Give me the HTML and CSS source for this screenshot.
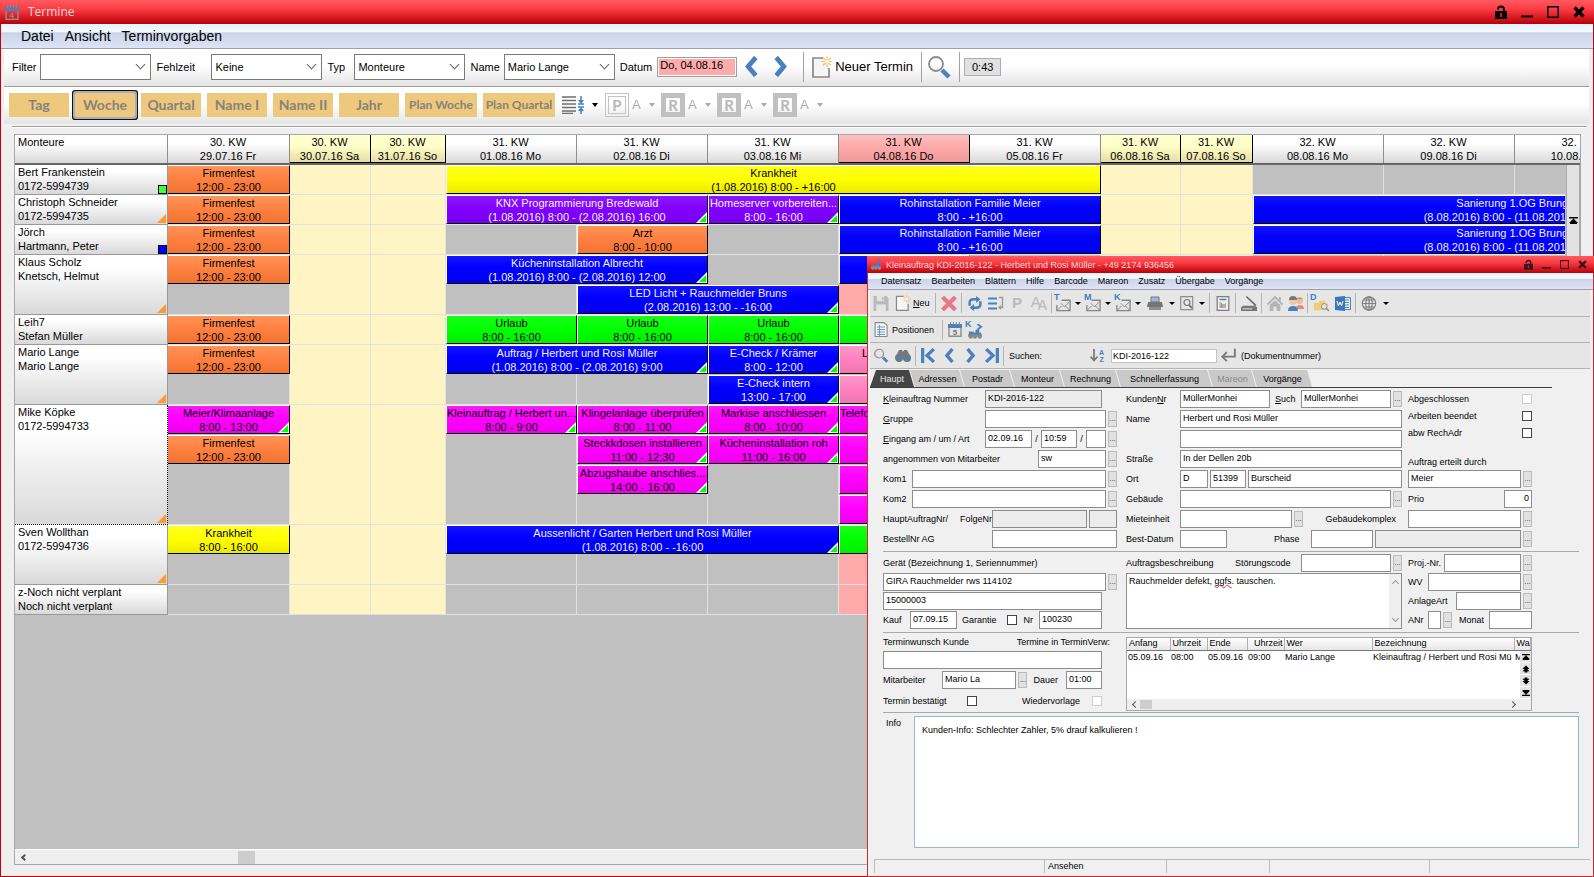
FILE: index.html
```html
<!DOCTYPE html>
<html lang="de">
<head>
<meta charset="utf-8">
<title>Termine</title>
<link rel="stylesheet" href="styles.css">
</head>
<body>
<svg class="defs" aria-hidden="true">
  <symbol id="lock" viewBox="0 0 12 14"><path d="M2 4.500a4 4 0 0 1 8 0V7H8V4.500a2 2 0 0 0-4 0H2z"/><path d="M0 6h12v8H0z"/><path d="M5 8h2v4H5z" fill="#b02028"/></symbol>
  <symbol id="min" viewBox="0 0 12 14"><path d="M0 10.500h12v2H0z"/></symbol>
  <symbol id="max" viewBox="0 0 12 14"><path d="M.75 1.750h10.500v10.500H.75z" fill="none" stroke="currentColor" stroke-width="1.500"/></symbol>
  <symbol id="close" viewBox="0 0 12 14"><path d="M1.500 2.500l9 9M10.500 2.500l-9 9" stroke="currentColor" stroke-width="3.200"/></symbol>
  <symbol id="left" viewBox="0 0 14 22"><path d="M12 1.500L4 11l8 9.500" fill="none" stroke="#4a80bd" stroke-width="5"/></symbol>
  <symbol id="right" viewBox="0 0 14 22"><path d="M2 1.500L10 11l-8 9.500" fill="none" stroke="#4a80bd" stroke-width="5"/></symbol>
  <symbol id="new" viewBox="0 0 20 22"><path d="M11 2H1v19h16v-9" fill="#f6f6f6" stroke="#888" stroke-width="1.700"/><path d="M15 0v11M9.500 5.500h11M11 1.500l8 8M19 1.500l-8 8" stroke="#f0c67c" stroke-width="1.200"/><circle cx="15" cy="5.500" r="2" fill="#fff3d6"/></symbol>
  <symbol id="glass" viewBox="0 0 24 24"><circle cx="9" cy="9" r="7" fill="none" stroke="#8a8a8a" stroke-width="1.800"/><path d="M15 15l7 7" stroke="#4a80bd" stroke-width="4.500"/></symbol>
  <symbol id="lines" viewBox="0 0 22 18"><path d="M0 1h14M0 4.500h14M0 8h14M0 11.500h14M0 15h14M0 17.500h11" stroke="#6e6e6e" stroke-width="1.500"/><path d="M16 8h6M16 11h6M19 0v5M19 18v-4" stroke="#4a80bd" stroke-width="1.500"/><path d="M16 4h6l-3 4zM16 15h6l-3-4z" fill="#4a80bd"/></symbol>
  <symbol id="cal" viewBox="0 0 14 15"><path d="M1 4v10.300h12V4" fill="none" stroke="#8d8d8d" stroke-width="1.400"/><path d="M0 2h14v4H0z" fill="#4a80bd"/><path d="M2.500 0v3M5.500 0v3M8.500 0v3M11.500 0v3" stroke="#8a8a8a"/></symbol>
  <symbol id="save" viewBox="0 0 14 14"><path d="M0 0h12l2 2v12H0z" fill="#b9b9b9"/><path d="M3 0h7v5H3zM2.500 8h9v6h-9z" fill="#e4e4e4"/><path d="M8 1h1.500v3H8z" fill="#b9b9b9"/></symbol>
  <symbol id="del" viewBox="0 0 14 14"><path d="M1 1l12 12M13 1L1 13" stroke="#e9788a" stroke-width="4"/></symbol>
  <symbol id="refresh" viewBox="0 0 14 14"><path d="M2 9V6q0-3 4-3h3M12 5v3q0 3-4 3H5" fill="none" stroke="#4a80bd" stroke-width="2.300"/><path d="M8 0l4 3-4 3.500zM6 14l-4-3 4-3.500z" fill="#4a80bd"/></symbol>
  <symbol id="listarr" viewBox="0 0 16 14"><path d="M0 2h9M0 7h9M0 12h9" stroke="#4a80bd" stroke-width="2"/><path d="M11 1h3.500v10H12" fill="none" stroke="#999" stroke-width="1.300"/><path d="M13 8.500v5L10 11z" fill="#999"/></symbol>
  <symbol id="mail" viewBox="0 0 17 15"><path d="M7 3h9v11H2V8" fill="none" stroke="#858585" stroke-width="1.400"/><path d="M6 6l4 4 6-6M2 14l5-5M16 14l-5-5" fill="none" stroke="#858585"/></symbol>
  <symbol id="printer" viewBox="0 0 16 15"><path d="M4 1h8v5H4z" fill="#9abadf" stroke="#777"/><path d="M1 6h14l1 5H0z" fill="#757575"/><path d="M2 11h12v3H2z" fill="#8d8d8d"/></symbol>
  <symbol id="preview" viewBox="0 0 14 15"><path d="M.700.700h12v13h-12z" fill="none" stroke="#8d8d8d" stroke-width="1.200"/><circle cx="7" cy="6.500" r="3" fill="none" stroke="#777" stroke-width="1.200"/><path d="M9 9l3 3" stroke="#777" stroke-width="1.800"/></symbol>
  <symbol id="chart" viewBox="0 0 13 15"><path d="M.700.700h11.600v13.600H.700z" fill="#f0f0f0" stroke="#808080" stroke-width="1.300"/><path d="M3 3.500h7" stroke="#4a80bd" stroke-width="1.500"/><path d="M3.500 12V6M6 12V8M9 12V7" stroke="#d9a860" stroke-width="1.200"/><path d="M4.800 12V7M7.500 12V8" stroke="#4a80bd"/></symbol>
  <symbol id="scanner" viewBox="0 0 15 14"><path d="M5 .500l9 8.500" stroke="#666" stroke-width="1.400"/><path d="M2 9h11l2 1.500V14H0v-3.500z" fill="#777"/><path d="M1.500 12h9" stroke="#ddd"/></symbol>
  <symbol id="house" viewBox="0 0 14 14"><path d="M0 8l7-7 7 7" fill="none" stroke="#b4b4b4" stroke-width="1.800"/><path d="M10.500 1h2v4h-2zM2 8.500L7 4l5 4.500V14H8.500v-4h-3v4H2z" fill="#b4b4b4"/></symbol>
  <symbol id="people" viewBox="0 0 16 15"><circle cx="11.500" cy="4.500" r="3.500" fill="#e8bd9b"/><path d="M8 3a4 3 0 0 1 7 0z" fill="#d98c58"/><path d="M8 13q0-4 4-4t4 4z" fill="#e88876"/><circle cx="5" cy="5" r="4" fill="#ecc7a8"/><path d="M1 4a4 4 0 0 1 8 0z" fill="#777"/><path d="M0 15q0-5 5-5t5 5z" fill="#4a80bd"/></symbol>
  <symbol id="folder" viewBox="0 0 17 16"><path d="M1 6h5l1-2h6v3h3l-2 7H1z" fill="#f2ca7e"/><circle cx="12" cy="10" r="3" fill="#e6e6e6" stroke="#888"/><path d="M14 12l3 3" stroke="#888" stroke-width="1.600"/></symbol>
  <symbol id="word" viewBox="0 0 16 15"><path d="M8 1.500h7.500v12H8z" fill="#e9f0f8" stroke="#4a80bd"/><path d="M9 4h5M9 6.500h5M9 9h5M9 11.500h5" stroke="#4a80bd"/><path d="M0 1l10-1v15L0 14z" fill="#3c76b8"/><path d="M2 5l1.400 5L5 6l1.500 4L8 5" fill="none" stroke="#fff"/></symbol>
  <symbol id="globe" viewBox="0 0 15 15"><g fill="none" stroke="#808080" stroke-width="1.200"><circle cx="7.500" cy="7.500" r="6.700"/><ellipse cx="7.500" cy="7.500" rx="3.200" ry="6.700"/><path d="M7.500 1v13M1 7.500h13M2 4h11M2 11h11"/></g></symbol>
  <symbol id="doc" viewBox="0 0 13 15"><path d="M.600.600h9l3 3v11H.600z" fill="#f4f4f4" stroke="#888" stroke-width="1.100"/><path d="M2.500 5h8M2.500 7.500h8M2.500 10h8M2.500 12.500h8M5 3v11" stroke="#6d9bd0"/></symbol>
  <symbol id="truck" viewBox="0 0 17 16"><path d="M11 0l4 3-4 3" fill="none" stroke="#4a80bd" stroke-width="2"/><path d="M2 8h5v1h2V6h4v3h2v4H2z" fill="#4a80bd"/><path d="M1 11h15v2.500H1z" fill="#8a8a8a"/><circle cx="4" cy="13.500" r="2.200" fill="#8a8a8a"/><circle cx="8.500" cy="13.500" r="2.200" fill="#8a8a8a"/><circle cx="13.500" cy="13.500" r="2.200" fill="#8a8a8a"/></symbol>
  <symbol id="binoc" viewBox="0 0 16 13"><path d="M4 1h3l1 2 1-2h3l4 8H0z" fill="#777"/><circle cx="4" cy="9" r="3.200" fill="#4a80bd" stroke="#777" stroke-width="1.600"/><circle cx="12" cy="9" r="3.200" fill="#4a80bd" stroke="#777" stroke-width="1.600"/></symbol>
  <symbol id="first" viewBox="0 0 14 14"><path d="M2 0v14M12.500 1L6 7l6.500 6" fill="none" stroke="#4a80bd" stroke-width="3"/></symbol>
  <symbol id="last" viewBox="0 0 14 14"><path d="M12 0v14M1.500 1L8 7l-6.500 6" fill="none" stroke="#4a80bd" stroke-width="3"/></symbol>
  <symbol id="down" viewBox="0 0 8 13"><path d="M4 0v11M.500 7.500L4 11.500l3.500-4" fill="none" stroke="#777" stroke-width="1.700"/></symbol>
  <symbol id="enter" viewBox="0 0 14 12"><path d="M13 0v7H2M6 3L2 7l4 4" fill="none" stroke="#777" stroke-width="1.600"/></symbol>
  <symbol id="totop" viewBox="0 0 9 7"><path d="M0 0h9v1.500H0zM4.500 1.500L9 6H0zM1 6h7v1H1z"/></symbol>
  <symbol id="up2" viewBox="0 0 9 8"><path d="M4.500 0L8.500 4h-8zM4.500 2.500L8.500 6.500h-8zM3 6h3v2H3z"/></symbol>
  <symbol id="tick" viewBox="0 0 11 11"><path d="M11 0v11H0z" fill="#fff"/><path d="M10 3v7H3z" fill="#0f0"/></symbol>
</svg>

<main class="window">
  <header class="titlebar">
    <svg class="app-icon"><use href="#cal"/><text x="7" y="13" text-anchor="middle">4</text></svg>
    <h1>Termine</h1>
    <div class="win-buttons">
      <button aria-label="Sperren"><svg><use href="#lock"/></svg></button>
      <button aria-label="Minimieren"><svg><use href="#min"/></svg></button>
      <button aria-label="Maximieren"><svg><use href="#max"/></svg></button>
      <button aria-label="Schließen"><svg><use href="#close"/></svg></button>
    </div>
  </header>
  <nav class="menubar"><button>Datei</button><button>Ansicht</button><button>Terminvorgaben</button></nav>

  <div class="bar filterbar">
    <label for="f1">Filter</label>
    <span class="combo"><select id="f1"><option></option></select></span>
    <label for="f2" class="wide-label">Fehlzeit</label>
    <span class="combo"><select id="f2"><option>Keine</option></select></span>
    <label for="f3" class="typ">Typ</label>
    <span class="combo"><select id="f3"><option>Monteure</option></select></span>
    <label for="f4" class="name">Name</label>
    <span class="combo"><select id="f4"><option>Mario Lange</option></select></span>
    <label for="f5">Datum</label>
    <input id="f5" class="date" value="Do, 04.08.16">
    <button class="arrow" aria-label="Zurück"><svg><use href="#left"/></svg></button>
    <button class="arrow" aria-label="Vor"><svg><use href="#right"/></svg></button>
    <i class="rule"></i>
    <button class="new"><svg><use href="#new"/></svg>Neuer Termin</button>
    <i class="rule"></i>
    <button class="find" aria-label="Suchen"><svg><use href="#glass"/></svg></button>
    <i class="rule"></i>
    <output class="clock">0:43</output>
  </div>

  <div class="bar viewbar">
    <button class="view">Tag</button>
    <button class="view active">Woche</button>
    <button class="view">Quartal</button>
    <button class="view">Name I</button>
    <button class="view">Name II</button>
    <button class="view">Jahr</button>
    <button class="view plan">Plan Woche</button>
    <button class="view plan">Plan Quartal</button>
    <button class="split height" aria-label="Zeilenhöhe"><svg class="lines"><use href="#lines"/></svg><i class="caret"></i></button>
    <button class="split off"><b class="tile outline">P</b>A<i class="caret"></i></button>
    <button class="split off"><b class="tile">R</b>A<i class="caret"></i></button>
    <button class="split off"><b class="tile">R</b>A<i class="caret"></i></button>
    <button class="split off"><b class="tile">R</b>A<i class="caret"></i></button>
  </div>
  <hr class="groove">

  <section class="planner">
    <div class="days head">
      <div class="corner">Monteure</div>
      <div>30. KW<br>29.07.16 Fr</div>
      <div class="we">30. KW<br>30.07.16 Sa</div>
      <div class="we">30. KW<br>31.07.16 So</div>
      <div>31. KW<br>01.08.16 Mo</div>
      <div>31. KW<br>02.08.16 Di</div>
      <div>31. KW<br>03.08.16 Mi</div>
      <div class="today">31. KW<br>04.08.16 Do</div>
      <div>31. KW<br>05.08.16 Fr</div>
      <div class="we">31. KW<br>06.08.16 Sa</div>
      <div class="we">31. KW<br>07.08.16 So</div>
      <div>32. KW<br>08.08.16 Mo</div>
      <div>32. KW<br>09.08.16 Di</div>
      <div>32. KW<br>10.08.16 Mi</div>
    </div>
    <div class="plan-body">
      <div class="days rows">
        <i class="col c2"></i><i class="col c3 we"></i><i class="col c4 we"></i><i class="col c5"></i><i class="col c6"></i><i class="col c7"></i><i class="col c8 today"></i><i class="col c9"></i><i class="col c10 we"></i><i class="col c11 we"></i><i class="col c12"></i><i class="col c13"></i><i class="col c14"></i>
        <i class="line r1"></i><i class="line r2"></i><i class="line r3"></i><i class="line r4 h2"></i><i class="line r6"></i><i class="line r7 h2"></i><i class="line r9 h4"></i><i class="line r13 h2"></i><i class="line r15"></i>

        <div class="who r1">Bert Frankenstein<br>0172-5994739<i class="mark green"></i></div>
        <div class="who r2">Christoph Schneider<br>0172-5994735<i class="flag"></i></div>
        <div class="who r3">Jörch<br>Hartmann, Peter<i class="mark blue"></i></div>
        <div class="who r4 h2">Klaus Scholz<br>Knetsch, Helmut<i class="flag"></i></div>
        <div class="who r6">Leih7<br>Stefan Müller</div>
        <div class="who r7 h2">Mario Lange<br>Mario Lange<i class="flag"></i></div>
        <div class="who r9 h4 focus">Mike Köpke<br>0172-5994733<i class="flag"></i></div>
        <div class="who r13 h2">Sven Wollthan<br>0172-5994736<i class="flag"></i></div>
        <div class="who r15">z-Noch nicht verplant<br>Noch nicht verplant</div>

        <div class="ev orange r1 c2">Firmenfest<br>12:00 - 23:00</div>
        <div class="ev yellow r1 c5 w5">Krankheit<br>(1.08.2016) 8:00 - +16:00</div>
        <div class="ev orange r2 c2">Firmenfest<br>12:00 - 23:00</div>
        <div class="ev violet r2 c5 w2">KNX Programmierung Bredewald<br>(1.08.2016) 8:00 - (2.08.2016) 16:00<svg><use href="#tick"/></svg></div>
        <div class="ev violet r2 c7">Homeserver vorbereiten...<br>8:00 - 16:00<svg><use href="#tick"/></svg></div>
        <div class="ev blue r2 c8 w2">Rohinstallation Familie Meier<br>8:00 - +16:00</div>
        <div class="ev blue r2 c12 w4">Sanierung 1.OG Brungs<br>(8.08.2016) 8:00 - (11.08.2016) 16:00</div>
        <div class="ev orange r3 c2">Firmenfest<br>12:00 - 23:00</div>
        <div class="ev orange r3 c6">Arzt<br>8:00 - 10:00</div>
        <div class="ev blue r3 c8 w2">Rohinstallation Familie Meier<br>8:00 - +16:00</div>
        <div class="ev blue r3 c12 w4">Sanierung 1.OG Brungs<br>(8.08.2016) 8:00 - (11.08.2016) 16:00</div>
        <div class="ev orange r4 c2">Firmenfest<br>12:00 - 23:00</div>
        <div class="ev blue r4 c5 w2">Kücheninstallation Albrecht<br>(1.08.2016) 8:00 - (2.08.2016) 12:00<svg><use href="#tick"/></svg></div>
        <div class="ev blue r4 c8"></div>
        <div class="ev blue r5 c6 w2">LED Licht + Rauchmelder Bruns<br>(2.08.2016) 13:00 - -16:00<svg><use href="#tick"/></svg></div>
        <div class="ev orange r6 c2">Firmenfest<br>12:00 - 23:00</div>
        <div class="ev lime r6 c5">Urlaub<br>8:00 - 16:00</div>
        <div class="ev lime r6 c6">Urlaub<br>8:00 - 16:00</div>
        <div class="ev lime r6 c7">Urlaub<br>8:00 - 16:00</div>
        <div class="ev lime r6 c8"></div>
        <div class="ev orange r7 c2">Firmenfest<br>12:00 - 23:00</div>
        <div class="ev blue r7 c5 w2">Auftrag / Herbert und Rosi Müller<br>(1.08.2016) 8:00 - (2.08.2016) 9:00<svg><use href="#tick"/></svg></div>
        <div class="ev blue r7 c7">E-Check / Krämer<br>8:00 - 12:00<svg><use href="#tick"/></svg></div>
        <div class="ev rose r7 c8">L</div>
        <div class="ev blue r8 c7">E-Check intern<br>13:00 - 17:00<svg><use href="#tick"/></svg></div>
        <div class="ev rose r8 c8"></div>
        <div class="ev pink r9 c2">Meier/Klimaanlage<br>8:00 - 13:00<svg><use href="#tick"/></svg></div>
        <div class="ev pink r9 c5">Kleinauftrag / Herbert un...<br>8:00 - 9:00<svg><use href="#tick"/></svg></div>
        <div class="ev pink r9 c6">Klingelanlage überprüfen<br>8:00 - 11:00<svg><use href="#tick"/></svg></div>
        <div class="ev pink r9 c7">Markise anschliessen<br>8:00 - 10:00<svg><use href="#tick"/></svg></div>
        <div class="ev pink start r9 c8">Telefo</div>
        <div class="ev orange r10 c2">Firmenfest<br>12:00 - 23:00</div>
        <div class="ev pink r10 c6">Steckkdosen installieren<br>11:00 - 12:30<svg><use href="#tick"/></svg></div>
        <div class="ev pink r10 c7">Kücheninstallation roh<br>11:00 - 16:00<svg><use href="#tick"/></svg></div>
        <div class="ev pink r10 c8"></div>
        <div class="ev pink r11 c6">Abzugshaube anschlies...<br>14:00 - 16:00<svg><use href="#tick"/></svg></div>
        <div class="ev pink r11 c8"></div>
        <div class="ev pink r12 c8"></div>
        <div class="ev yellow r13 c2">Krankheit<br>8:00 - 16:00</div>
        <div class="ev blue r13 c5 w3">Aussenlicht / Garten Herbert und Rosi Müller<br>(1.08.2016) 8:00 - -16:00<svg><use href="#tick"/></svg></div>
        <div class="ev lime r13 c8"></div>
      </div>
      <div class="vscroll"><button aria-label="Zum Anfang"><svg><use href="#totop"/></svg></button></div>
    </div>
    <div class="hscroll"><button aria-label="Nach links"><i class="chev west"></i></button><i class="thumb"></i></div>
  </section>
</main>

<section class="dialog" role="dialog" aria-labelledby="dt">
  <header class="titlebar small">
    <svg class="app-icon"><use href="#truck"/></svg>
    <h2 id="dt">Kleinauftrag KDI-2016-122 - Herbert und Rosi Müller - +49 2174 936456</h2>
    <div class="win-buttons">
      <button aria-label="Sperren"><svg><use href="#lock"/></svg></button>
      <button aria-label="Minimieren"><svg><use href="#min"/></svg></button>
      <button aria-label="Maximieren"><svg><use href="#max"/></svg></button>
      <button aria-label="Schließen"><svg><use href="#close"/></svg></button>
    </div>
  </header>
  <nav class="menubar small"><button>Datensatz</button><button>Bearbeiten</button><button>Blättern</button><button>Hilfe</button><button>Barcode</button><button>Mareon</button><button>Zusatz</button><button>Übergabe</button><button>Vorgänge</button></nav>

  <div class="tools">
    <button class="t22" aria-label="Speichern"><svg><use href="#save"/></svg></button>
    <button class="t-new"><svg><use href="#new"/></svg><span><u>N</u>eu</span></button>
    <i class="sep"></i>
    <button class="t22" aria-label="Löschen"><svg><use href="#del"/></svg></button>
    <i class="sep"></i>
    <button class="t22" aria-label="Aktualisieren"><svg><use href="#refresh"/></svg></button>
    <button class="t20" aria-label="Liste"><svg><use href="#listarr"/></svg></button>
    <button class="t22 letter">P</button>
    <button class="t22 letter aa">A<sub>A</sub></button>
    <i class="sep"></i>
    <button class="t18 mail"><b>T</b><svg><use href="#mail"/></svg></button><i class="caret"></i>
    <button class="t18 mail"><b>M</b><svg><use href="#mail"/></svg></button><i class="caret"></i>
    <button class="t18 mail"><b>K</b><svg><use href="#mail"/></svg></button><i class="caret"></i>
    <button class="t22" aria-label="Drucken"><svg><use href="#printer"/></svg></button><i class="caret"></i>
    <button class="t18" aria-label="Vorschau"><svg><use href="#preview"/></svg></button><i class="caret"></i>
    <i class="sep"></i>
    <button class="t22" aria-label="Auswertung"><svg><use href="#chart"/></svg></button>
    <i class="sep"></i>
    <button class="t22" aria-label="Scannen"><svg><use href="#scanner"/></svg></button>
    <i class="sep"></i>
    <button class="t22" aria-label="Start"><svg><use href="#house"/></svg></button>
    <button class="t20" aria-label="Kunden"><svg><use href="#people"/></svg></button>
    <i class="sep"></i>
    <button class="t22 mail"><b>D</b><svg><use href="#folder"/></svg></button>
    <button class="t22" aria-label="Word"><svg><use href="#word"/></svg></button>
    <i class="sep"></i>
    <button class="t22" aria-label="Web"><svg><use href="#globe"/></svg></button><i class="caret"></i>
  </div>
  <div class="tools">
    <button class="t-pos"><svg><use href="#doc"/></svg>Positionen</button>
    <i class="sep"></i>
    <button class="t20 calbtn"><svg><use href="#cal"/></svg><b>5</b></button>
    <button class="t20 mail"><b>K</b><svg><use href="#truck"/></svg></button>
  </div>
  <div class="tools">
    <button class="t22" aria-label="Suchen"><svg><use href="#glass"/></svg></button>
    <button class="t22" aria-label="Fernglas"><svg><use href="#binoc"/></svg></button>
    <i class="sep"></i>
    <button class="t20" aria-label="Erster"><svg><use href="#first"/></svg></button>
    <button class="t22" aria-label="Vorheriger"><svg><use href="#left"/></svg></button>
    <button class="t22" aria-label="Nächster"><svg><use href="#right"/></svg></button>
    <button class="t20" aria-label="Letzter"><svg><use href="#last"/></svg></button>
    <i class="sep"></i>
    <label for="search" class="search-label">Suchen:</label>
    <button class="sort" aria-label="Sortieren"><svg><use href="#down"/></svg><b>A<br>Z</b></button>
    <input id="search" value="KDI-2016-122">
    <button class="t22" aria-label="Los"><svg><use href="#enter"/></svg></button>
    <span>(Dokumentnummer)</span>
  </div>

  <div class="tabs" role="tablist">
    <button role="tab" aria-selected="true" class="k1">Haupt</button><button role="tab" class="k2">Adressen</button><button role="tab" class="k2">Postadr</button><button role="tab" class="k2">Monteur</button><button role="tab" class="k3">Rechnung</button><button role="tab" class="k4">Schnellerfassung</button><button role="tab" class="k5" disabled>Mareon</button><button role="tab" class="k3">Vorgänge</button>
  </div>

  <form class="form">
    <div class="section">
      <div class="left">
        <div class="row"><label for="a1" class="l102"><u>K</u>leinauftrag Nummer</label><input id="a1" class="grow ro trim" readonly value="KDI-2016-122"></div>
        <div class="row"><label for="a2" class="l102"><u>G</u>ruppe</label><input id="a2" class="grow"><button type="button" class="dots">...</button></div>
        <div class="row"><label for="a3" class="l102"><u>E</u>ingang am / um / Art</label><input id="a3" class="w47" value="02.09.16"><span class="slash">/</span><input class="w36" aria-label="Uhrzeit" value="10:59"><span class="slash">/</span><input class="grow" aria-label="Art"><button type="button" class="dots">...</button></div>
        <div class="row"><label for="a4" class="l155">angenommen von Mitarbeiter</label><input id="a4" class="grow" value="sw"><button type="button" class="dots">...</button></div>
        <div class="row"><label for="a5" class="l29">Kom1</label><input id="a5" class="grow"><button type="button" class="dots">...</button></div>
        <div class="row"><label for="a6" class="l29">Kom2</label><input id="a6" class="grow"><button type="button" class="dots">...</button></div>
        <div class="row"><label for="a7" class="l109"><span>HauptAuftragNr/</span><span>FolgeNr</span></label><input id="a7" class="grow ro" readonly><input class="w28 ro next" readonly aria-label="FolgeNr"></div>
        <div class="row"><label for="a8" class="l109">BestellNr AG</label><input id="a8" class="grow"></div>
      </div>
      <div class="wide">
        <div class="row"><label for="b1" class="l54">Kunden<u>N</u>r</label><input id="b1" class="w90" value="MüllerMonhei"><label for="b2" class="such"><u>S</u>uch</label><input id="b2" class="grow" value="MüllerMonhei"><button type="button" class="dots">...</button></div>
        <div class="checks">
          <div><label for="ck1">Abgeschlossen</label><input id="ck1" type="checkbox" disabled></div>
          <div><label for="ck2">Arbeiten beendet</label><input id="ck2" type="checkbox"></div>
          <div><label for="ck3">abw RechAdr</label><input id="ck3" type="checkbox"></div>
          <label for="c4" class="by">Auftrag erteilt durch</label>
        </div>
        <div class="row main"><label for="b3" class="l54">Name</label><input id="b3" class="grow" value="Herbert und Rosi Müller"></div>
        <div class="row main"><span class="l54"></span><input class="grow" aria-label="Name 2"></div>
        <div class="row main"><label for="b5" class="l54">Straße</label><input id="b5" class="grow" value="In der Dellen 20b"></div>
        <div class="row"><label for="b6" class="l54">Ort</label><input id="b6" class="w28" value="D"><input class="w36 next" aria-label="PLZ" value="51399"><input class="grow next" aria-label="Stadt" value="Burscheid"></div>
        <div class="row"><input id="c4" class="grow" value="Meier"><button type="button" class="dots">...</button></div>
        <div class="row"><label for="b7" class="l54">Gebäude</label><input id="b7" class="grow"><button type="button" class="dots">...</button></div>
        <div class="row"><label for="c5">Prio</label><input id="c5" class="w28 push num" value="0"></div>
        <div class="row"><label for="b8" class="l54">Mieteinheit</label><input id="b8" class="w112"><button type="button" class="dots">...</button><label for="c6" class="push komplex">Gebäudekomplex</label></div>
        <div class="row"><input id="c6" class="grow"><button type="button" class="dots">...</button></div>
        <div class="row span"><label for="b9" class="l54">Best-Datum</label><input id="b9" class="w47"><label for="c7" class="phase">Phase</label><input id="c7" class="w62"><input class="grow ro next" readonly aria-label="Phase Text"><button type="button" class="dots">...</button></div>
      </div>
    </div>
    <hr>
    <div class="section tight">
      <div class="left">
        <div class="row"><label for="d1">Gerät (Bezeichnung 1, Seriennummer)</label></div>
        <div class="row"><input id="d1" class="grow" value="GIRA Rauchmelder rws 114102"><button type="button" class="dots">...</button></div>
        <div class="row"><input class="grow trim" aria-label="Seriennummer" value="15000003"></div>
        <div class="row"><label for="d2" class="l27">Kauf</label><input id="d2" class="w47" value="07.09.15"><label for="d3" class="gar">Garantie</label><input id="d3" type="checkbox"><label for="d4" class="nr">Nr</label><input id="d4" class="grow trim" value="100230"></div>
      </div>
      <div class="wide">
        <div class="row"><span class="l109" id="ab">Auftragsbeschreibung</span><label for="e1" class="stoer">Störungscode</label><input id="e1" class="grow"><button type="button" class="dots">...</button></div>
        <div class="row"><label for="g1" class="l36">Proj.-Nr.</label><input id="g1" class="grow"><button type="button" class="dots">...</button></div>
        <div class="memo"><div role="textbox" aria-labelledby="ab" contenteditable="true" spellcheck="false">Rauchmelder defekt, <span class="spell">ggfs</span>. tauschen.</div><div class="mscroll"><i class="chev north"></i><i class="chev south"></i></div></div>
        <div class="row"><label for="g2" class="l20">WV</label><input id="g2" class="grow"><button type="button" class="dots">...</button></div>
        <div class="row"><label for="g3" class="l48">AnlageArt</label><input id="g3" class="grow"><button type="button" class="dots">...</button></div>
        <div class="row"><label for="g4" class="l20">ANr</label><input id="g4" class="w13"><button type="button" class="dots">...</button><label for="g5" class="monat">Monat</label><input id="g5" class="grow"></div>
      </div>
    </div>
    <hr>
    <div class="section third">
      <div class="left">
        <div class="row"><label for="h1">Terminwunsch Kunde</label><span class="push verw">Termine in TerminVerw:</span></div>
        <div class="row"><input id="h1" class="grow trim"></div>
        <div class="row"><label for="h2" class="l60">Mitarbeiter</label><input id="h2" class="grow" value="Mario La"><button type="button" class="dots">...</button><label for="h3" class="dauer">Dauer</label><input id="h3" class="w36 trim" value="01:00"></div>
        <div class="row"><label for="h4" class="l84">Termin bestätigt</label><input id="h4" type="checkbox"><label for="h5" class="push wv">Wiedervorlage</label><input id="h5" type="checkbox" class="trim" disabled></div>
      </div>
      <div class="list">
        <table>
          <colgroup><col class="t43"><col class="t36"><col class="t40"><col class="t36"><col class="t88"><col class="t144"><col></colgroup>
          <thead><tr><th>Anfang</th><th>Uhrzeit</th><th>Ende</th><th class="end">Uhrzeit</th><th>Wer</th><th>Bezeichnung</th><th>Wa</th></tr></thead>
          <tbody><tr><td>05.09.16</td><td>08:00</td><td>05.09.16</td><td>09:00</td><td>Mario Lange</td><td>Kleinauftrag / Herbert und Rosi Mü</td><td>M</td></tr></tbody>
        </table>
        <div class="nav"><button type="button" aria-label="Anfang"><svg><use href="#totop"/></svg></button><button type="button" aria-label="Hoch"><svg><use href="#up2"/></svg></button><button type="button" aria-label="Runter"><svg class="flip"><use href="#up2"/></svg></button><button type="button" aria-label="Ende"><svg class="flip"><use href="#totop"/></svg></button></div>
        <div class="lscroll"><i class="chev west"></i><i class="thumb"></i><i class="chev east"></i></div>
      </div>
    </div>
    <hr>
    <div class="info"><label for="info">Info</label><textarea id="info" spellcheck="false">Kunden-Info: Schlechter Zahler, 5% drauf kalkulieren !</textarea></div>
  </form>
  <footer class="status"><span></span><span>Ansehen</span><span></span><span></span><span></span></footer>
</section>
</body>
</html>
```
FILE: styles.css
```css
* { box-sizing: border-box; }
html, body { height: 100%; margin: 0; }
body {
  position: relative;
  overflow: hidden;
  font: 11px/14px "Liberation Sans", Arial, sans-serif;
  color: #000;
  background: #efefef;
}
button, input, select, textarea { font: inherit; color: inherit; margin: 0; border-radius: 0; }
button { background: none; border: 0; padding: 0; white-space: nowrap; }
svg { display: block; fill: currentColor; flex: none; overflow: visible; }
i { font-style: normal; display: block; flex: none; }
.defs { display: none; }
label, span { white-space: nowrap; }

/* window frame */
.window {
  height: 100%;
  display: flex;
  flex-direction: column;
  border: solid #c4000e;
  border-width: 0 1px 1px;
}
.titlebar {
  flex: none;
  display: flex;
  align-items: center;
  height: 24px;
  padding: 0 9px 0 5px;
  margin: 0 -1px;
  background: linear-gradient(#ff5a60, #fb3a42 40%, #b80008);
}
.titlebar h1, .titlebar h2 { margin: 0 auto 0 9px; color: #f6d6d6; font-weight: 400; }
.titlebar h1 { font: 12px/16px "Open Sans", sans-serif; }
.app-icon { width: 14px; height: 15px; color: #8d8d8d; font: bold 8px/8px "Liberation Sans", sans-serif; }
.win-buttons { display: flex; gap: 14px; }
.win-buttons svg { width: 12px; height: 14px; }
.menubar {
  flex: none;
  display: flex;
  align-items: center;
  gap: 11px;
  height: 25px;
  padding-left: 20px;
  font-size: 14px;
  line-height: 16px;
  background: linear-gradient(#e4f3fc, #f4fbff 34%, #cbd3e8 36%, #dde4f8);
  border-bottom: 1px solid #a0a0a0;
}

/* filter bar */
.bar {
  flex: none;
  display: flex;
  align-items: center;
  margin: 0 4px 0 3px;
  background: linear-gradient(#fff 45%, #e4e4e4);
}
.filterbar { height: 38px; padding: 0 0 2px 8px; border-bottom: 1px solid #a0a0a0; }
.filterbar label { margin-right: 5px; }
.filterbar > label:first-child { margin-right: 4px; }
.filterbar .wide-label { width: 50px; }
.filterbar .typ { width: 22px; }
.filterbar .name { margin-right: 4px; }
.combo { display: grid; width: 111px; height: 26px; margin-right: 5px; background: #fff; border: 1px solid #7a7a7a; }
.combo select { grid-area: 1 / 1; appearance: none; border: 0; background: none; padding: 0 3px; }
.combo::after {
  content: "";
  grid-area: 1 / 1;
  place-self: center end;
  width: 6px;
  height: 6px;
  margin: 0 6px 4px 0;
  border: solid #666;
  border-width: 0 1px 1px 0;
  rotate: 45deg;
  pointer-events: none;
}
.date { width: 80px; height: 20px; margin-right: 6px; padding: 0 2px 3px; border: 1px solid #a0a0a0; outline: 1px solid #fff; outline-offset: -2px; background: #ffabab; }
.arrow { width: 30px; }
.arrow svg { width: 14px; height: 21px; margin-left: 1px; }
.rule { width: 1px; height: 30px; background: #a0a0a0; }
.new { display: flex; align-items: center; gap: 3px; padding: 0 8px; font-size: 13px; }
.new svg { width: 20px; height: 22px; }
.find { padding: 0 8px 0 5px; }
.find svg { width: 24px; height: 24px; }
.clock { margin-left: 4px; padding: 1px 7px; background: #e1e1e1; border: 1px solid #adadad; }

/* view bar */
.viewbar { height: 37px; gap: 6px; padding: 0 0 2px 5px; }
.view { width: 60px; height: 24px; background: #eec87c; color: #86837c; font: bold 14px/24px Lato, sans-serif; }
.view.active { outline: 2px solid #a8adbe; box-shadow: 0 0 0 3px #111; border-radius: 1px; }
.view.plan { width: 72px; font-size: 12px; }
.split { display: flex; align-items: center; gap: 3px; width: 50px; font-size: 13px; }
.split.height { width: 36px; margin: 0 1px; }
.split .caret { margin-left: auto; }
.split.off { color: #ababab; }
.lines { width: 22px; height: 18px; }
.tile { width: 24px; height: 24px; border: 5px solid #c0c0c0; color: #b8b8b8; font: bold 15px/14px Lato, sans-serif; }
.tile.outline { border: 4px double #c4c4c4; line-height: 16px; }
.caret { width: 0; height: 0; border: solid transparent; border-width: 4px 3px 0; border-top-color: currentColor; }
.groove { flex: none; width: auto; margin: 2px 6px 6px 11px; border: 0; height: 2px; background: linear-gradient(#a0a0a0 50%, #fff 50%); }

/* planner */
.planner {
  flex: 1;
  min-height: 0;
  display: flex;
  flex-direction: column;
  margin: 0 12px 11px 13px;
  border: 1px solid #a6a6ae;
}
.days { display: grid; grid-template-columns: 153px 122px 81px 75px repeat(5, 131px) 80px 72px repeat(4, 131px); }
.head { flex: none; overflow: hidden; height: 30px; border-bottom: 2px solid #666; text-align: center; }
.head div { padding-right: 1px; background: linear-gradient(#fff 30%, #d8d8d8); border-right: 1px solid #8e8e8e; }
.head .corner { text-align: left; padding-left: 3px; }
.head .we { background: linear-gradient(#ffffd0, #ffffc8 40%, #e4daa2); border-right-color: #000; box-shadow: inset 0 -1px #000; }
.head .today { background: linear-gradient(#ffc0c0, #ffabab 40%, #ee9898); border-right-color: #000; box-shadow: inset 0 -1px #000; }
.plan-body { flex: 1; min-height: 0; display: flex; background: #c0c0c0; }
.rows { flex: 1; min-width: 0; overflow: hidden; grid-template-rows: repeat(15, 30px); align-content: start; }
.vscroll { width: 14px; padding-top: 48px; background: #e2e2e2; border: 1px solid #aaa; border-top: 0; margin-left: 1px; }
.vscroll svg { width: 9px; height: 7px; margin-left: 2px; }
.hscroll { flex: none; display: flex; align-items: center; height: 15px; padding-left: 7px; background: #efefef; border-top: 1px solid #fff; }
.hscroll .thumb { width: 17px; height: 13px; margin-left: 211px; background: #cdcdcd; }
.chev { width: 5px; height: 5px; border: solid #555; border-width: 1px 0 0 1px; }
.hscroll .chev { border-width: 2px 0 0 2px; }
.west { rotate: -45deg; }
.east { rotate: 135deg; }
.north { rotate: 45deg; border-color: #999; }
.south { rotate: 225deg; border-color: #999; }

.col { grid-row: 1 / -1; border-right: 1px solid #e2e2e2; }
.col.we { background: #fff5c4; }
.col.today { background: #ffabab; }
.line { grid-column: 2 / -1; border-bottom: 1px solid #e2e2e2; }
.who {
  grid-column: 1;
  position: relative;
  padding-left: 3px;
  background: linear-gradient(#fff 20%, #d9d9d9);
  border: solid #999;
  border-width: 0 1px 1px 0;
  box-shadow: inset 0 1px #fff;
}
.who.focus { border: 1px dotted #000; border-left: 0; border-top: 0; }
.mark { position: absolute; right: 0; bottom: 0; width: 9px; height: 9px; border: 1px solid #000; }
.mark.green { background: #40ff40; }
.mark.blue { background: #00f; }
.flag { position: absolute; right: 1px; bottom: 1px; width: 9px; height: 9px; background: #ff9a33; clip-path: polygon(100% 0, 100% 100%, 0 100%); }
.ev {
  position: relative;
  margin-bottom: 1px;
  overflow: hidden;
  text-align: center;
  white-space: nowrap;
  border: 1px solid #fff;
  border-right-color: #000;
  border-bottom-color: #000;
  line-height: 14px;
}
.ev.c2 { border-left: 0; }
.ev svg { position: absolute; right: 0; bottom: 0; width: 11px; height: 11px; }
.ev.start { text-align: left; }
.orange { background: linear-gradient(#ff9456, #ff8040 50%, #ee7434); }
.yellow { background: linear-gradient(#ffff20, #ff0 50%, #eaea00); }
.violet { background: linear-gradient(#8c18ff, #8000ff 50%, #7600ee); color: #f0f0ff; }
.ev.blue { background: linear-gradient(#1414ff, #00f 40%, #0000ee); color: #f0f0ff; }
.lime { background: linear-gradient(#18ff18, #0f0 50%, #00ee00); }
.pink { background: linear-gradient(#ff18ff, #f0f 50%, #ee00ee); }
.rose { background: linear-gradient(#ff98cc, #ff80c0 50%, #ee78b0); text-align: left; padding-left: 22px; }

.c2 { grid-column-start: 2; } .c3 { grid-column-start: 3; } .c4 { grid-column-start: 4; }
.c5 { grid-column-start: 5; } .c6 { grid-column-start: 6; } .c7 { grid-column-start: 7; }
.c8 { grid-column-start: 8; } .c9 { grid-column-start: 9; } .c10 { grid-column-start: 10; }
.c11 { grid-column-start: 11; } .c12 { grid-column-start: 12; } .c13 { grid-column-start: 13; }
.c14 { grid-column-start: 14; }
.w2 { grid-column-end: span 2; } .w3 { grid-column-end: span 3; }
.w4 { grid-column-end: span 4; } .w5 { grid-column-end: span 5; }
.r1 { grid-row: 1; } .r2 { grid-row: 2; } .r3 { grid-row: 3; } .r4 { grid-row: 4; }
.r5 { grid-row: 5; } .r6 { grid-row: 6; } .r7 { grid-row: 7; } .r8 { grid-row: 8; }
.r9 { grid-row: 9; } .r10 { grid-row: 10; } .r11 { grid-row: 11; } .r12 { grid-row: 12; }
.r13 { grid-row: 13; } .r15 { grid-row: 15; }
.h2 { grid-row-end: span 2; } .h4 { grid-row-end: span 4; }

/* order dialog floating over the planner */
.dialog {
  position: absolute;
  left: 867px;
  right: 0;
  top: 256px;
  bottom: 0;
  display: flex;
  flex-direction: column;
  background: #f0f0f0;
  border: solid #cc2a34;
  border-width: 0 1px 1px;
  font-size: 9px;
  line-height: 12px;
}
.titlebar.small { height: 17px; padding: 0 7px 0 3px; }
.titlebar.small h2 { font-size: 9px; margin-left: 4px; }
.small .app-icon { width: 12px; height: 11px; }
.small .win-buttons { gap: 9px; color: #33181a; }
.small .win-buttons svg { width: 9px; height: 11px; }
.menubar.small { height: 17px; gap: 10px; padding-left: 13px; font-size: 9px; line-height: 12px; }
.tools {
  flex: none;
  display: flex;
  align-items: center;
  height: 26px;
  margin: 0 3px 0 2px;
  background: #e6e6e6;
  border-bottom: 1px solid #b4b4b4;
}
.menubar + .tools { height: 27px; }
.t22, .t20, .t18 { position: relative; display: grid; place-items: center; width: 22px; height: 20px; }
.t20 { width: 20px; }
.t18 { width: 18px; }
.tools svg { width: 16px; height: 15px; }
.t-new { display: flex; align-items: center; width: 42px; gap: 2px; padding-left: 3px; }
.tools .t-new svg { height: 16px; }
.sep { width: 4px; height: 20px; background: linear-gradient(90deg, transparent 1px, #b4b4b4 1px 2px, transparent 2px); }
.tools .caret { border-width: 3px 3px 0; margin: 0 3px; }
.letter { font: bold 15px/16px "Liberation Sans", sans-serif; color: #b9b9b9; }
.letter.aa { display: block; font-weight: 400; }
.aa sub { font-size: 14px; margin-left: -3px; vertical-align: -3px; }
.mail b { position: absolute; left: 0; top: 0; font-size: 9px; line-height: 9px; color: #3f7dc0; }
.tools .mail svg { margin-top: 3px; }
.t-pos { display: flex; align-items: center; gap: 3px; width: 71px; padding-left: 3px; }
.calbtn b { position: absolute; left: 0; right: 0; bottom: 3px; font-size: 8px; line-height: 9px; color: #777; }
.search-label { width: 82px; padding-left: 3px; }
.sort { display: flex; align-items: center; width: 21px; margin-left: 2px; gap: 1px; }
.tools .sort svg { width: 8px; height: 13px; }
.sort b { font-size: 7px; line-height: 7px; color: #4a80bd; }
.tools input { width: 106px; height: 14px; padding: 0 1px; border: 1px solid #c4c4c4; background: #fff; }
.tools input + button + span { margin-left: 2px; }

.tabs { flex: none; display: flex; height: 18px; margin: 1px 41px 0 2px; border-bottom: 1px solid #404040; }
.tabs button {
  height: 17px;
  margin-right: -4px;
  padding: 0 5px 0 6px;
  background: #c9c9c9;
  clip-path: polygon(0 0, calc(100% - 5px) 0, 100% 100%, 5px 100%);
}
.tabs .k1 { width: 44px; background: #454545; color: #e8e8e8; padding: 0 4px; clip-path: polygon(6px 0, calc(100% - 5px) 0, 100% 100%, 0 100%); z-index: 1; }
.tabs .k2 { flex: 0 1 54px; }
.tabs .k3 { flex: 0 1 60px; }
.tabs .k4 { flex: 0 1 96px; }
.tabs .k5 { flex: 0 1 48px; }
.tabs button:disabled { color: #8a8a8a; }

/* form */
.form { flex: 1; min-height: 0; display: flex; flex-direction: column; padding: 1px 14px 0 15px; margin: 0; }
.form hr { width: 100%; margin: 3px 0 0; border: 0; border-top: 1px solid #aaa; flex: none; }
.section { flex: none; display: flex; gap: 9px; }
.left { width: 234px; display: grid; grid-auto-rows: 18px; gap: 2px; align-content: start; }
.wide { width: 406px; display: grid; grid-template-columns: 276px 124px; grid-auto-rows: 18px; gap: 2px 6px; }
.section > * { margin-top: 1px; }
.tight > * { margin-top: 2px; row-gap: 1px; }
.row { display: flex; align-items: center; min-width: 0; }
.row input:not([type=checkbox]) { height: 18px; min-width: 0; padding: 0 2px 3px 2px; border: 1px solid #8c8c8c; background: #fff; }
.row .ro:not([type=checkbox]) { background: #ececec; }
.row.main { grid-column: 1; }
.span { grid-column: 1 / -1; }
.grow { flex: 1; }
.push { margin-left: auto; }
.komplex { margin-right: 6px; }
.row .num:not([type=checkbox]) { text-align: right; }
.next { margin-left: 2px; }
.trim { margin-right: 15px; }
.dots { width: 9px; height: 16px; margin-left: 2px; font-size: 8px; line-height: 14px; color: #333; background: #e1e1e1; border: 1px solid #bbb; }
.slash { width: 9px; text-align: center; }
.l20 { width: 20px; } .l27 { width: 27px; } .l29 { width: 29px; } .l36 { width: 36px; }
.l48 { width: 48px; } .l54 { width: 54px; } .l60 { width: 59px; } .l84 { width: 84px; }
.l102 { width: 102px; } .l109 { width: 109px; } .l155 { width: 155px; }
label.l109 { display: flex; justify-content: space-between; }
.w13 { width: 13px; } .w28 { width: 28px; } .w36 { width: 36px; } .w47 { width: 47px; }
.w62 { width: 62px; } .w90 { width: 90px; } .w112 { width: 112px; }
.such { width: 31px; padding-left: 5px; }
.phase { width: 84px; padding-left: 47px; }
.gar { margin: 0 10px 0 5px; }
.nr { margin: 0 6px 0 7px; }
.stoer { width: 66px; }
.monat { width: 37px; padding-left: 7px; }
.dauer { margin: 0 8px 0 6px; }
.verw { margin-right: 7px; }
.wv { margin-right: 12px; }
input[type=checkbox] { appearance: none; flex: none; width: 10px; height: 10px; border: 1px solid #444; background: #fff; }
input[type=checkbox]:disabled { border-color: #ccc; }
.checks { grid-column: 2; grid-row: span 4; display: flex; flex-direction: column; }
.checks div { display: flex; justify-content: space-between; align-items: center; height: 17px; }
.checks .by { margin-top: 15px; }
.memo { grid-row: span 3; display: flex; border: 1px solid #8c8c8c; background: #fff; }
.memo > div:first-child { flex: 1; padding: 1px 2px; outline: 0; }
.spell { text-decoration: underline wavy #e03030 1px; text-underline-offset: 0; text-decoration-skip-ink: none; }
.mscroll { width: 12px; display: flex; flex-direction: column; justify-content: space-between; align-items: center; padding: 7px 0; background: #efefef; }
.third .left { grid-template-rows: 16px 18px 20px 20px; gap: 1px; }
.third + hr { margin-top: 1px; }
.list { position: relative; width: 406px; height: 74px; margin-top: 4px; display: flex; flex-direction: column; overflow: hidden; background: #fff; border: 1px solid #a8a8a8; }
table { table-layout: fixed; width: 100%; border-collapse: collapse; }
th, td { overflow: hidden; white-space: nowrap; padding: 0 1px; text-align: left; font-weight: 400; }
th { height: 12px; line-height: 11px; padding-left: 2px; background: linear-gradient(#fff, #e6e6e6); border-right: 1px solid #b0b0b0; border-bottom: 1px solid #777; }
th.end { text-align: right; }
td { height: 13px; }
.t36 { width: 37px; } .t40 { width: 40px; } .t43 { width: 43px; } .t88 { width: 88px; } .t144 { width: 142px; }
.nav { position: absolute; right: 0; top: 13px; display: grid; gap: 1px; }
.nav button { display: grid; place-items: center; width: 11px; height: 11px; background: #e4e4e4; }
.nav svg { width: 8px; height: 8px; }
.flip { rotate: 180deg; }
.lscroll { display: flex; align-items: center; height: 11px; margin-top: auto; padding: 0 16px 0 6px; background: #efefef; }
.lscroll .thumb { width: 12px; height: 9px; margin: 0 auto 0 2px; background: #cdcdcd; }
.info { flex: 1; min-height: 0; display: flex; margin: 3px 0 11px; padding-left: 3px; }
.info label { width: 28px; padding-top: 1px; }
.info textarea { flex: 1; resize: none; padding: 7px; border: 1px solid #9cb4cc; background: #fff; outline: 0; }
.status { flex: none; display: grid; grid-template-columns: 170px 122px 103px 160px 1fr; height: 14px; margin: 0 3px 3px 6px; }
.status span { padding-left: 3px; border: solid #bbb; border-width: 1px 0 0 1px; }
```
